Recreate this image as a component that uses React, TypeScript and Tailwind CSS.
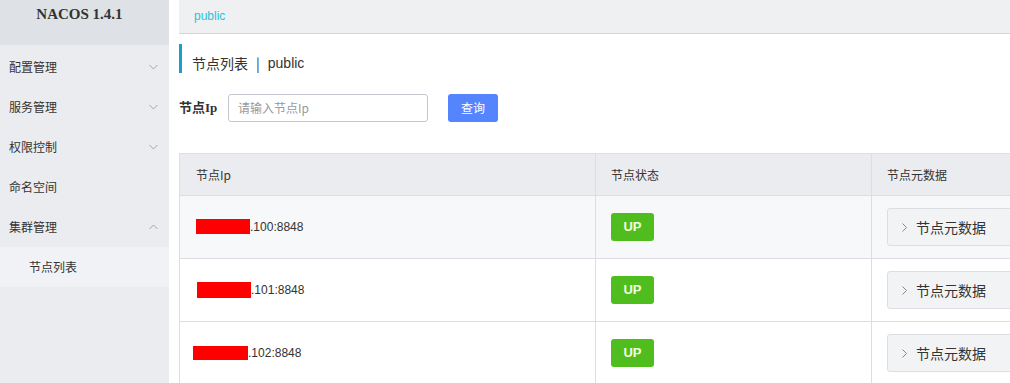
import React from "react";

const cjk = '"Noto Sans CJK SC", "Liberation Sans", sans-serif';
const latin = '"Liberation Sans", "Noto Sans CJK SC", sans-serif';
const serif = '"Liberation Serif", "Noto Sans CJK SC", serif';

function Chevron({ up }: { up?: boolean }) {
  return (
    <svg width="9" height="6" viewBox="0 0 9 6" className="text-[#a0a4ab]">
      <path d={up ? "M0.5 5 L4.5 1 L8.5 5" : "M0.5 1 L4.5 5 L8.5 1"} fill="none" stroke="currentColor" strokeWidth="1" />
    </svg>
  );
}

function MenuItem({ label, chevron, up }: { label: string; chevron?: boolean; up?: boolean }) {
  return (
    <div className="h-10 flex items-center justify-between pl-[9px] pr-[11px] text-[12px] text-[#333]" style={{ fontFamily: cjk }}>
      <span>{label}</span>
      {chevron && <Chevron up={up} />}
    </div>
  );
}

function Row({ suffix, bg, redW, redH, redMl, redMt }: { suffix: string; bg: string; redW: number; redH: number; redMl: number; redMt: number }) {
  return (
    <div className={`flex h-[63px] border-b border-[#dcdee3] ${bg}`}>
      <div className="w-[416px] shrink-0 border-r border-[#dcdee3] flex items-center pl-[16px] text-[12px] text-[#333]" style={{ fontFamily: latin }}>
        <span className="inline-block bg-[#ff0000]" style={{ width: redW, height: redH, marginLeft: redMl, marginTop: redMt }} />
        <span>.{suffix}:8848</span>
      </div>
      <div className="w-[276px] shrink-0 border-r border-[#dcdee3] flex items-center pl-[15px]">
        <div className="w-[43px] h-[28px] rounded-[3px] bg-[#4fbd1d] flex items-center justify-center text-[13px] font-bold text-[#f4ffe0]" style={{ fontFamily: latin }}>
          UP
        </div>
      </div>
      <div className="flex-1 flex items-center pl-[15px]">
        <div className="w-[140px] h-[38px] rounded-[3px] bg-[#f2f3f5] border border-[#dcdee3] flex items-center pl-[14px] text-[14px] text-[#333]" style={{ fontFamily: cjk }}>
          <svg width="5" height="9" viewBox="0 0 5 9" className="mr-[9px] text-[#888]">
            <path d="M0.5 0.5 L4.5 4.5 L0.5 8.5" fill="none" stroke="currentColor" strokeWidth="1" />
          </svg>
          <span>节点元数据</span>
        </div>
      </div>
    </div>
  );
}

export default function App() {
  return (
    <div className="w-[1010px] h-[383px] overflow-hidden flex bg-white">
      <aside className="w-[169px] shrink-0 bg-[#eaecf0] flex flex-col">
        <div className="h-[45px] bg-[#dee1e6] flex justify-center pr-[10px] pt-[3px]">
          <span className="text-[15px] font-bold text-[#333]" style={{ fontFamily: serif }}>NACOS 1.4.1</span>
        </div>
        <div className="pt-[2px]">
          <MenuItem label="配置管理" chevron />
          <MenuItem label="服务管理" chevron />
          <MenuItem label="权限控制" chevron />
          <MenuItem label="命名空间" />
          <MenuItem label="集群管理" chevron up />
          <div className="h-10 bg-[#f1f2f5] flex items-center pl-[29px] text-[12px] text-[#333]" style={{ fontFamily: cjk }}>
            节点列表
          </div>
        </div>
      </aside>
      <main className="flex-1 pl-[10px] flex flex-col overflow-hidden">
        <div className="h-[34px] shrink-0 bg-[#eff0f2] border-b border-[#d4d6da] flex items-center pl-[15px] pb-[2px] text-[12px] text-[#2bc3d8]" style={{ fontFamily: latin }}>
          public
        </div>
        <div className="mt-[10px] h-[29px] border-l-[3px] border-[#1a9fc6] flex items-center pl-[10px] pt-[9px] text-[14px] text-[#333]" style={{ fontFamily: cjk }}>
          <span>节点列表</span>
          <span className="mx-[8px]">|</span>
          <span style={{ fontFamily: latin }}>public</span>
        </div>
        <div className="mt-[21px] flex items-center h-[28px]">
          <span className="w-[49px] text-[13px] font-bold text-[#333]" style={{ fontFamily: serif }}>节点Ip</span>
          <div className="w-[200px] h-[28px] border border-[#c4c6cf] rounded-[3px] flex items-center pl-[9px] text-[12px] text-[#999]" style={{ fontFamily: cjk }}>
            请输入节点Ip
          </div>
          <div className="ml-[20px] w-[50px] h-[28px] rounded-[3px] bg-[#5584ff] flex items-center justify-center text-[12px] text-white" style={{ fontFamily: cjk }}>
            查询
          </div>
        </div>
        <div className="mt-[31px] border-l border-t border-[#dcdee3] w-[900px]">
          <div className="flex h-[42px] bg-[#ebecf0] border-b border-[#dcdee3] text-[12px] text-[#333]" style={{ fontFamily: cjk }}>
            <div className="w-[416px] shrink-0 border-r border-[#dcdee3] flex items-center pl-[16px]">节点Ip</div>
            <div className="w-[276px] shrink-0 border-r border-[#dcdee3] flex items-center pl-[15px]">节点状态</div>
            <div className="flex-1 flex items-center pl-[15px]">节点元数据</div>
          </div>
          <Row suffix="100" bg="bg-[#f7f8fa]" redW={54} redH={15} redMl={0} redMt={-1} />
          <Row suffix="101" bg="bg-white" redW={54} redH={16} redMl={1} redMt={0} />
          <Row suffix="102" bg="bg-white" redW={55} redH={14} redMl={-3} redMt={0} />
        </div>
      </main>
    </div>
  );
}
